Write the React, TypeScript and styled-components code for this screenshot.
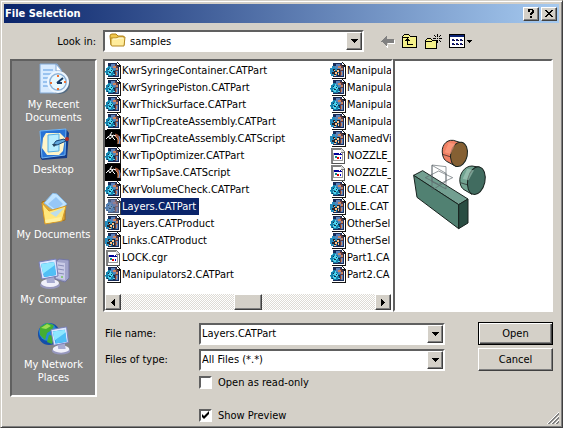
import React, { useState } from "react";
import styled, { createGlobalStyle, css } from "styled-components";

const GlobalStyle = createGlobalStyle`
  * { box-sizing: border-box; }
  body { margin: 0; background: #d4d0c8; }
  body, button, input, select {
    font-family: "DejaVu Sans Condensed", "Liberation Sans", sans-serif;
    font-size: 11px;
    line-height: 13px;
    color: #000;
  }
`;

const raised = css`
  background: #d4d0c8;
  border: 1px solid;
  border-color: #fff #404040 #404040 #fff;
  box-shadow: inset -1px -1px 0 #808080;
`;

const sunken = css`
  border: 2px solid;
  border-color: #606060 #fff #fff #606060;
`;

const Dialog = styled.main`
  display: flex;
  flex-direction: column;
  min-height: 100vh;
  padding: 2px;
  background: #d4d0c8;
  border: 1px solid;
  border-color: #d4d0c8 #404040 #404040 #d4d0c8;
  box-shadow: inset 1px 1px 0 #fff, inset -1px -1px 0 #808080;
  position: relative;
`;

const TitleBar = styled.header`
  display: flex;
  align-items: center;
  gap: 2px;
  height: 19px;
  margin: 1px;
  padding: 0 2px 0 1px;
  background: linear-gradient(90deg, #0a246a, #a6caf0);
`;

const Title = styled.h1`
  flex: 1;
  margin: 0;
  color: #fff;
  font-size: 11px;
  font-weight: bold;
`;

const CaptionButton = styled.button`
  ${raised}
  display: grid;
  place-items: center;
  width: 16px;
  height: 14px;
  padding: 0;
`;

const Content = styled.div`
  display: grid;
  grid-template-columns: 87px minmax(0, 1fr);
  column-gap: 6px;
  row-gap: 7px;
  padding: 6px 7px 2px;
`;

const LookLabel = styled.label`
  align-self: center;
  justify-self: end;
  padding-right: 1px;
`;

const LookRow = styled.div`
  display: flex;
  align-items: center;
  padding-right: 80px;
`;

const Combo = styled.div`
  ${sunken}
  display: flex;
  flex: 1;
  align-items: center;
  min-width: 0;
  height: 22px;
  background: #fff;
`;

const Field = styled.input`
  flex: 1;
  min-width: 0;
  padding: 0 1px;
  border: 0;
  outline: 0;
  background: transparent;
`;

const Select = styled.select`
  flex: 1;
  min-width: 0;
  padding: 0 1px;
  border: 0;
  outline: 0;
  appearance: none;
  background: transparent;
`;

const FolderSelect = styled(Select)`
  padding-left: 4px;
`;

const DropButton = styled.button`
  ${raised}
  display: grid;
  place-items: center;
  width: 16px;
  height: 18px;
  padding: 0;
`;

const Tools = styled.div`
  display: flex;
  align-items: center;
  gap: 7px;
  margin-left: 17px;
`;

const ToolButton = styled.button`
  display: flex;
  align-items: center;
  padding: 0;
  border: 0;
  background: none;
`;

const Places = styled.nav`
  ${sunken}
  display: flex;
  flex-direction: column;
  align-self: start;
  min-height: 338px;
  padding-top: 2px;
  background: #848484;
`;

const Place = styled.button`
  display: flex;
  flex-direction: column;
  align-items: center;
  gap: 3px;
  height: 65px;
  padding: 0;
  border: 0;
  background: none;
  color: #fff;
  white-space: pre-line;
`;

const Panel = styled.div`
  display: flex;
  flex-direction: column;
`;

const Browser = styled.div`
  display: flex;
  height: 253px;
`;

const FileBox = styled.section`
  ${sunken}
  display: flex;
  flex: 1;
  flex-direction: column;
  min-width: 0;
  background: #fff;
`;

const Columns = styled.div`
  display: flex;
  flex: 1;
  min-height: 0;
  padding-top: 1px;
  overflow: hidden;
`;

const FileColumn = styled.ul`
  flex: 0 0 225px;
  margin: 0;
  padding: 0;
  list-style: none;
`;

const FileButton = styled.button`
  display: flex;
  align-items: center;
  height: 17px;
  padding: 0;
  border: 0;
  background: none;
  white-space: nowrap;
`;

const FileName = styled.span<{ $selected: boolean }>`
  padding: 2px 3px 2px 1px;
  background: ${(p) => (p.$selected ? "#0a246a" : "transparent")};
  color: ${(p) => (p.$selected ? "#fff" : "#000")};
`;

const ScrollBar = styled.div`
  display: flex;
  height: 16px;
  background: repeating-conic-gradient(#fff 0 25%, #dedbd5 0 50%) 0 0 / 2px 2px;
`;

const ScrollTrack = styled.div`
  display: flex;
  flex: 1;
  padding-left: 113px;
`;

const ScrollThumb = styled.div`
  ${raised}
  width: 28px;
`;

const ScrollButton = styled.button`
  ${raised}
  display: grid;
  place-items: center;
  width: 16px;
  padding: 0;
`;

const Preview = styled.section`
  ${sunken}
  width: 160px;
  padding: 59px 5px;
  background: #fff;
`;

const Form = styled.form`
  display: grid;
  grid-template-columns: 94px minmax(0, 1fr) 75px;
  align-items: center;
  row-gap: 3px;
  margin: 10px 0 0 2px;
`;

const FieldCell = styled.div`
  display: flex;
  margin-right: 33px;
`;

const PushButton = styled.button<{ $primary?: boolean }>`
  ${raised}
  height: 23px;
  padding: 0;
  ${(p) => p.$primary && css`
    border-color: #000;
    box-shadow: inset 1px 1px 0 #fff, inset -1px -1px 0 #404040, inset -2px -2px 0 #808080;
  `}
`;

const CheckRow = styled.label`
  display: flex;
  grid-column: 2 / -1;
  align-items: center;
  gap: 6px;
  height: 14px;
  margin-top: 1px;
`;

const PreviewCheckRow = styled(CheckRow)`
  margin-top: 16px;
`;

const CheckBox = styled.input`
  ${sunken}
  width: 13px;
  height: 13px;
  margin: 0;
  appearance: none;
  background: #fff;
  &:checked {
    background: #fff url("data:image/svg+xml,%3Csvg xmlns='http://www.w3.org/2000/svg' viewBox='0 0 9 9'%3E%3Cpath d='M1 3v3l2 2 5-5V0L3 5z'/%3E%3C/svg%3E") center / 9px 9px no-repeat;
  }
`;

const Grip = styled.svg`
  position: absolute;
  right: 3px;
  bottom: 3px;
`;

const Caret = () => (
  <svg width="7" height="4" shapeRendering="crispEdges" aria-hidden="true">
    <path d="M0 0h7v1H0zM1 1h5v1H1zM2 2h3v1H2zM3 3h1v1H3z" />
  </svg>
);

const SideArrow = ({ right = false }: { right?: boolean }) => (
  <svg width="4" height="7" shapeRendering="crispEdges" aria-hidden="true">
    <path d={right ? "M0 0h1v7H0zM1 1h1v5H1zM2 2h1v3H2zM3 3h1v1H3z" : "M3 0h1v7H3zM2 1h1v5H2zM1 2h1v3H1zM0 3h1v1H0z"} />
  </svg>
);

type Kind = "part" | "product" | "script" | "cgr";

function FileIcon({ kind, dim }: { kind: Kind; dim?: boolean }) {
  if (kind === "cgr")
    return (
      <svg width="16" height="16" shapeRendering="crispEdges" aria-hidden="true">
        <path d="M1 0h10l4 4v12H1z" fill="#808080" />
        <path d="M3 2h8v3h3v10H3z" fill="#fff" />
        <path d="M11 1v3h3z" fill="#ddd" />
        <path d="M14 4h1v12H2v-1h12z" fill="#555" />
        <path d="M3 5h10v8H3z" fill="#999" />
        <path d="M4 7h8v5H4z" fill="#fff" />
        <path d="M4 5h8v2H4z" fill="#000098" />
        <path d="M9 5h1v1H9zM11 5h1v1h-1z" fill="#fff" />
        <path d="M5 8h2v2H5z" fill="#0a8a8a" />
        <path d="M7 9h2v2H7z" fill="#e00000" />
        <path d="M10 9h1v2h-1z" fill="#0000d0" />
      </svg>
    );
  if (kind === "script")
    return (
      <svg width="16" height="17" aria-hidden="true">
        <path d="M0 0h16v17H0z" fill="#000" />
        <path d="M10 5q5 1 4 9" fill="none" stroke="#9a5038" strokeWidth="3" />
        <path d="M11 7q3 1 2 7" fill="none" stroke="#e5a066" />
        <path d="M14 6q2 4 0 8" fill="none" stroke="#5a92d8" />
        <path d="M1 9l3-3 3-1 1 3 2 2M3 6l2 3 3-4 3 1M5 5l2-3" fill="none" stroke="#fff" />
      </svg>
    );
  return (
    <svg width="16" height="17" shapeRendering="crispEdges" aria-hidden="true" opacity={dim ? 0.8 : 1}>
      <path d="M2 0h10l4 4v12H2z" fill="#fff" />
      <path d="M3 1h9v3h2v11H3z" fill={dim ? "#21345f" : "#172b58"} />
      <path d="M7 2h4l2 3v9h-3V9L7 6z" fill="#613c42" />
      <path d="M4 4h2V2h4v2H8v2h3v2H7V6H4zM11 9h2v5h-2z" fill={dim ? "#4e5e94" : "#5b83bb"} />
      <path d="M8 4h3v2h2v2h-2V6H8zM11 10h1v3h-1z" fill={dim ? "#7e5e70" : "#ca855e"} />
      <path d="M14 4h2v13H2v-1h13V5h-1z" fill="#151515" />
      <path d="M12 0h1v1h1v1h1v1h1v1h-4z" fill="#151515" />
      <path d="M12 1h1v1h1v1h-2z" fill="#fff" />
      {kind === "product" ? (
        <>
          <path d="M0 6h2V4h3v2h2v4h2v2H7v2H1v-2H0z" fill="#278cbd" />
          <path d="M3 7h2v2h2V7h3v3H8v2h2v2H8v-2H6v2H4v-2H2v-2h2V9H3z" fill="#23242c" />
          <path d="M4 8h1v1H4zM7 8h2v2H7zM5 10h2v2H5zM8 11h1v2H8zM4 13h2v1H4z" fill="#ffc58d" />
        </>
      ) : (
        <>
          <path d="M3 4h3v2h2v2h2v2h-1v2H8v2H3v-1H1v-2H0V9h1V6h2z" fill={dim ? "#2960a0" : "#1580ab"} />
          <path d="M2 5h1v1H2zM5 5h1v2h1v1h1v2H7v1H6v2H4v-1H3v-2h2V9H3V7h2zM0 10h1v1H0zM8 12h2v1H8z" fill={dim ? "#4976a8" : "#51d5ee"} />
          <path d="M3 7h1v1H3zM6 8h1v1H6zM4 10h2v1H4zM8 9h2v1H8zM2 12h1v1H2z" fill="#112b48" />
        </>
      )}
    </svg>
  );
}

const OpenFolder = () => (
  <svg width="18" height="18" viewBox="0 0 18 18" aria-hidden="true">
    <path d="M2 4q0-2 2-2h4l2 2h5q1 0 1 1v8H3z" fill="#f1c74c" stroke="#b18117" />
    <path d="M3 6h5l2-1h7l-1 9H4q-1 0-1-2z" fill="#ffec9b" stroke="#b48820" />
    <path d="M5 7h4l2-1h4" stroke="#fffbe1" fill="none" />
  </svg>
);

const BackIcon = () => (
  <svg width="14" height="13" shapeRendering="crispEdges" aria-hidden="true">
    <path d="M7 9h7V5h-1v3H7zM6 10h1v3H6zM5 11h1v1H5z" fill="#fff" />
    <path d="M0 6h1V5h1V4h1V3h1V2h1V1h1v3h7v4H6v3H5v-1H4V9H3V8H2V7H0z" fill="#808080" />
  </svg>
);

const UpFolderIcon = () => (
  <svg width="16" height="16" shapeRendering="crispEdges" aria-hidden="true">
    <path d="M2 1h5v1h1v1h7v12H0V3h1V2h1z" />
    <path d="M2 2h5v1h1v1h6v10H1V3h1z" fill="#f4f08a" />
    <path d="M1 4h6v1H1z" fill="#000" />
    <path d="M5 5h1v1h1v1h1v1H6v3h5v1H5V8H3V7h1V6h1z" />
  </svg>
);

const NewFolderIcon = () => (
  <svg width="17" height="17" shapeRendering="crispEdges" aria-hidden="true">
    <path d="M2 5h4v1h1v1h5v9H0V7h1V6h1z" />
    <path d="M2 6h4v1h1v1h4v7H1V7h1z" fill="#f4f08a" />
    <path d="M1 8h6v1H1z" />
    <path d="M12 1h1v3h-1zM9 2h1v1H9zM10 3h1v1h-1zM14 3h1v1h-1zM15 2h1v1h-1zM8 5h3v1H8zM14 5h3v1h-3zM12 5h1v1h-1zM10 7h1v1h-1zM12 7h1v3h-1zM14 7h1v1h-1zM15 8h1v1h-1z" />
  </svg>
);

const ViewIcon = () => (
  <svg width="24" height="15" shapeRendering="crispEdges" aria-hidden="true">
    <path d="M0 0h16v14H0z" />
    <path d="M1 3h14v10H1z" fill="#fff" />
    <path d="M1 1h14v2H1z" fill="#092275" />
    <path d="M3 5h2v2H3zM7 5h2v2H7zM11 5h2v2h-2zM3 9h2v2H3zM7 9h2v2H7zM11 9h2v2h-2z" fill="#151b71" />
    <path d="M5 6h1v1H5zM9 6h1v1H9zM13 6h1v1h-1zM5 10h1v1H5zM9 10h1v1H9zM13 10h1v1h-1z" />
    <path d="M18 6h5v1h-1v1h-1v1h-1V8h-1V7h-1z" />
  </svg>
);

type PlaceKind = "recent" | "desktop" | "documents" | "computer" | "network";

const Monitor = () => (
  <>
    <ellipse cx="12" cy="27" rx="10" ry="4" fill="#9697bd" />
    <ellipse cx="12" cy="25" rx="9" ry="4" fill="#f0f0fa" />
    <path d="m8 19 8-1 1 7H9z" fill="#a7abd1" />
    <path d="m1 4 17-3 2 17-16 3z" fill="#dbe6ff" stroke="#777db9" />
    <path d="m3 6 13-2 2 13-12 2z" fill="#1989df" />
    <path d="m3 6 13-2 1 5-12 7z" fill="#8de7ff" />
    <path d="m6 15 11-8 1 10-12 2z" fill="#50bff5" />
  </>
);

function PlaceIcon({ kind }: { kind: PlaceKind }) {
  return (
    <svg width="32" height="32" viewBox="0 0 32 32" aria-hidden="true">
      {kind === "recent" && (
        <>
          <path d="M2 1h17l4 6v23H2z" fill="#d8ebff" stroke="#82a9d5" />
          <path d="M18 1v7h6z" fill="#fff" stroke="#80a6d2" />
          <path d="M5 7h10M5 11h15M5 15h13M5 19h8M5 23h9" stroke="#5b9ae0" />
          <circle cx="22" cy="21" r="10" fill="#536b83" />
          <circle cx="20" cy="19" r="10" fill="#8fb4da" stroke="#edf6ff" strokeWidth="2" />
          <circle cx="20" cy="19" r="7.5" fill="#e8f8ff" />
          <path d="m19 20 6-5M19 20h5" stroke="#193b63" strokeWidth="2" />
          <path d="M19 12h2v2h-2zM12 19h2v2h-2zM26 18h2v2h-2zM19 25h2v2h-2z" fill="#f17132" />
        </>
      )}
      {kind === "desktop" && (
        <>
          <path d="m3 3 25-2 3 4-2 25-25 2-2-3z" fill="#143b87" />
          <path d="m2 3 26-2-1 26-23 3z" fill="#2873d6" stroke="#73b6f4" />
          <path d="M8 5h14l5 5-2 13-4 4H9l-5-7 1-10z" fill="#fff5c9" />
          <path d="m10 7 11-1v17l-11 1z" fill="#b9edff" stroke="#57aee4" />
          <path d="m15 17 3-4 8-2 2 2-9 4z" fill="#5fa6db" stroke="#174477" />
          <circle cx="29" cy="11" r="2" fill="#b22a23" />
          <path d="m14 16 5 0-3 3z" fill="#294862" />
        </>
      )}
      {kind === "documents" && (
        <>
          <path d="m4 9 6-2 4 4 13-2v18L7 30z" fill="#dca93a" stroke="#a66f17" />
          <path d="m6 10 9-10 4 1 10 10-10 9z" fill="#c0e4ff" stroke="#82b4e1" />
          <path d="m10 11 8-7 7 7-7 6z" fill="#96c7f6" />
          <path d="m4 10 7 8 17-5-4 15-17 3z" fill="#ffe77b" stroke="#d89a26" />
          <path d="m12 20 14-5-8 9z" fill="#bbddea" />
          <path d="m7 27 16-3-1 4-14 2z" fill="#fff09f" />
        </>
      )}
      {kind === "computer" && (
        <>
          <path d="m17 4 4-3 10 1v18l-4 4-10-3z" fill="#a1a4cb" stroke="#7477a2" />
          <path d="m18 4 9 1v17l-9-2z" fill="#c9cbe7" />
          <path d="m20 7 6 1M20 11l6 1M20 15l6 1" stroke="#888cb7" />
          <circle cx="24" cy="19" r="1" fill="#74c95d" />
          <Monitor />
        </>
      )}
      {kind === "network" && (
        <>
          <circle cx="11" cy="11" r="11" fill="#134eaa" />
          <circle cx="10" cy="9" r="9" fill="#258ad5" />
          <path d="m2 4 7-4 7 2-2 5-5 3-2 7-5-5zM11 12l6 1-3 8-5-2z" fill="#44ae32" />
          <path d="m3 5 6-4 4 2-5 3z" fill="#9ddd51" />
          <g transform="translate(12 3) scale(.92)"><Monitor /></g>
        </>
      )}
    </svg>
  );
}

const PreviewDrawing = () => (
  <svg width="100" height="120" viewBox="0 0 300 360" role="img" aria-label="Part preview">
    <g stroke="#18231f" strokeWidth="3" strokeLinejoin="round">
      <path d="m41 166 27-14 136 85-28 17z" fill="#739f91" />
      <path d="m41 166 135 88v72L51 232z" fill="#518172" />
      <path d="m176 254 28-17v72l-28 17z" fill="#294d42" />
      <path d="M186 69L160 61c-24-3-38 20-32 44 2 10 6 15 12 19l28 15z" fill="#ef8064" />
      <ellipse cx="177" cy="103" rx="25" ry="37" transform="rotate(12 177 103)" fill="#856033" />
      <path d="M240 142L216 138c-24 0-40 27-36 50 2 11 6 17 12 21l24 14z" fill="#71a391" />
      <ellipse cx="229" cy="182" rx="26" ry="42" transform="rotate(12 229 182)" fill="#416c60" />
    </g>
    <path d="M128 103l25 8M181 188l23 7" fill="none" stroke="#222" strokeWidth="2" />
    <path d="m146 68 20 4-14 30-18-5z" fill="#ff9f82" opacity=".7" />
    <path d="m202 146 20 5-16 30-18-5z" fill="#b6d5c8" opacity=".5" />
    <path d="M96 135v75l42-25v-45zM96 136l42 24v47l-42-22zM76 173l40-20 42 20-42 20z" fill="none" stroke="#5c656a" strokeWidth="2" />
  </svg>
);

const places: [PlaceKind, string][] = [
  ["recent", "My Recent\nDocuments"], ["desktop", "Desktop"], ["documents", "My Documents"],
  ["computer", "My Computer"], ["network", "My Network\nPlaces"],
];

const files: [string, Kind][][] = [
  [
    ["KwrSyringeContainer.CATPart", "part"], ["KwrSyringePiston.CATPart", "part"],
    ["KwrThickSurface.CATPart", "part"], ["KwrTipCreateAssembly.CATPart", "part"],
    ["KwrTipCreateAssembly.CATScript", "script"], ["KwrTipOptimizer.CATPart", "part"],
    ["KwrTipSave.CATScript", "script"], ["KwrVolumeCheck.CATPart", "part"],
    ["Layers.CATPart", "part"], ["Layers.CATProduct", "product"], ["Links.CATProduct", "product"],
    ["LOCK.cgr", "cgr"], ["Manipulators2.CATPart", "part"],
  ],
  [
    ["Manipulat", "product"], ["Manipulat", "part"], ["Manipulat", "part"], ["Manipulat", "product"],
    ["NamedVie", "product"], ["NOZZLE_", "cgr"], ["NOZZLE_", "cgr"], ["OLE.CAT", "part"],
    ["OLE.CAT", "product"], ["OtherSel", "part"], ["OtherSel", "product"], ["Part1.CA", "part"], ["Part2.CA", "part"],
  ],
];

export default function App() {
  const [name, setName] = useState("Layers.CATPart");
  const [readOnly, setReadOnly] = useState(false);
  const [preview, setPreview] = useState(true);

  return (
    <>
      <GlobalStyle />
      <Dialog>
        <TitleBar>
          <Title>File Selection</Title>
          <CaptionButton type="button" aria-label="Help">
            <svg width="8" height="10" aria-hidden="true" shapeRendering="crispEdges">
              <path d="M1 0h5v1h1v3H6v1H5v1H3V4h1V3h1V1H3v2H1zM3 7h2v2H3z" />
            </svg>
          </CaptionButton>
          <CaptionButton type="button" aria-label="Close">
            <svg width="8" height="7" aria-hidden="true" shapeRendering="crispEdges">
              <path d="M0 0h2v1h1v1h2V1h1V0h2v1H7v1H6v1H5v1h1v1h1v1h1v1H6V6H5V5H3v1H2v1H0V6h1V5h1V4h1V3H2V2H1V1H0z" />
            </svg>
          </CaptionButton>
        </TitleBar>
        <Content>
          <LookLabel htmlFor="folder">Look in:</LookLabel>
          <LookRow>
            <Combo>
              <svg width="3" height="1" aria-hidden="true" />
              <OpenFolder />
              <FolderSelect id="folder"><option>samples</option></FolderSelect>
              <DropButton type="button" aria-label="Show folders"><Caret /></DropButton>
            </Combo>
            <Tools>
              <ToolButton type="button" aria-label="Back"><BackIcon /></ToolButton>
              <ToolButton type="button" aria-label="Up one level"><UpFolderIcon /></ToolButton>
              <ToolButton type="button" aria-label="New folder"><NewFolderIcon /></ToolButton>
              <ToolButton type="button" aria-label="View menu"><ViewIcon /></ToolButton>
            </Tools>
          </LookRow>
          <Places>
            {places.map(([kind, label]) => (
              <Place type="button" key={kind}><PlaceIcon kind={kind} />{label}</Place>
            ))}
          </Places>
          <Panel>
            <Browser>
              <FileBox>
                <Columns>
                  {files.map((column, c) => (
                    <FileColumn key={c}>
                      {column.map(([label, kind], i) => {
                        const selected = c === 0 && label === name;
                        return (
                          <li key={i}>
                            <FileButton type="button" onClick={() => setName(label)}>
                              <FileIcon kind={kind} dim={selected} />
                              <FileName $selected={selected}>{label}</FileName>
                            </FileButton>
                          </li>
                        );
                      })}
                    </FileColumn>
                  ))}
                </Columns>
                <ScrollBar>
                  <ScrollButton type="button" aria-label="Scroll left"><SideArrow /></ScrollButton>
                  <ScrollTrack><ScrollThumb /></ScrollTrack>
                  <ScrollButton type="button" aria-label="Scroll right"><SideArrow right /></ScrollButton>
                </ScrollBar>
              </FileBox>
              <Preview>{preview && <PreviewDrawing />}</Preview>
            </Browser>
            <Form onSubmit={(e) => e.preventDefault()}>
              <label htmlFor="name">File name:</label>
              <FieldCell>
                <Combo>
                  <Field id="name" value={name} onChange={(e) => setName(e.target.value)} />
                  <DropButton type="button" aria-label="Show recent names"><Caret /></DropButton>
                </Combo>
              </FieldCell>
              <PushButton $primary type="submit">Open</PushButton>
              <label htmlFor="type">Files of type:</label>
              <FieldCell>
                <Combo>
                  <Select id="type"><option>All Files (*.*)</option></Select>
                  <DropButton type="button" aria-label="Show file types"><Caret /></DropButton>
                </Combo>
              </FieldCell>
              <PushButton type="button">Cancel</PushButton>
              <CheckRow>
                <CheckBox type="checkbox" checked={readOnly} onChange={(e) => setReadOnly(e.target.checked)} />
                Open as read-only
              </CheckRow>
              <PreviewCheckRow>
                <CheckBox type="checkbox" checked={preview} onChange={(e) => setPreview(e.target.checked)} />
                Show Preview
              </PreviewCheckRow>
            </Form>
          </Panel>
        </Content>
        <Grip width="12" height="12" aria-hidden="true">
          <path d="M0 12 12 0M4 12l8-8M8 12l4-4" stroke="#fff" />
          <path d="M1 12 12 1M2 12 12 2M5 12l7-7M6 12l6-6M9 12l3-3M10 12l2-2" stroke="#808080" />
        </Grip>
      </Dialog>
    </>
  );
}
